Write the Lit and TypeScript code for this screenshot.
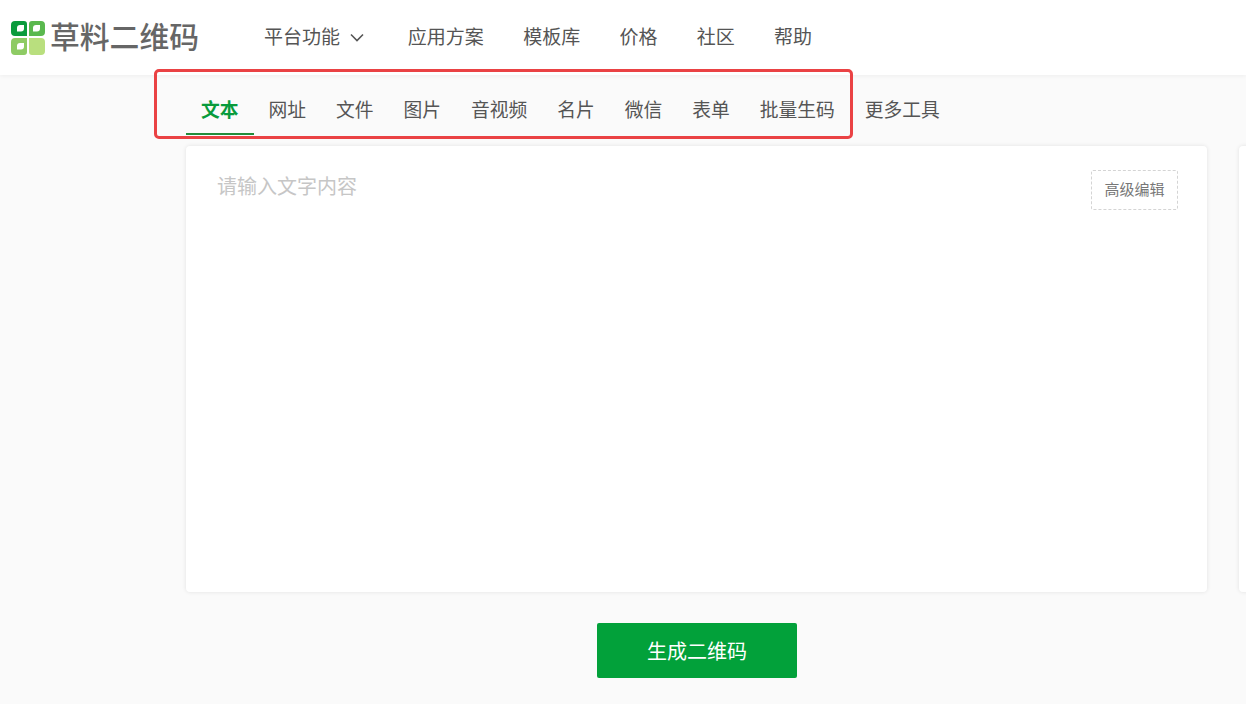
import { LitElement, html, css } from "lit";
import { customElement } from "lit/decorators.js";

const NAV = ["应用方案", "模板库", "价格", "社区", "帮助"];
const TABS = ["文本", "网址", "文件", "图片", "音视频", "名片", "微信", "表单", "批量生码", "更多工具"];

@customElement("app-root")
export class AppRoot extends LitElement {
  static styles = css`
    :host {
      display: block;
      position: relative;
      width: 100%;
      height: 704px;
      overflow: hidden;
      background: #fafafa;
      font-family: "Liberation Sans", "Noto Sans CJK SC", sans-serif;
      color: #555;
    }
    .header {
      height: 75px;
      box-sizing: border-box;
      background: #fff;
      box-shadow: 0 1px 4px rgba(0, 0, 0, 0.05);
      display: flex;
      align-items: center;
      padding-left: 11px;
    }
    .logo {
      display: flex;
      align-items: center;
      gap: 4px;
      width: 253px;
      flex: none;
    }
    .logo svg { display: block; flex: none; }
    .logo-text {
      font-size: 29.8px;
      line-height: 34px;
      font-weight: 500;
      color: #666;
      white-space: nowrap;
    }
    .nav { display: flex; align-items: center; gap: 39.3px; font-size: 19px; color: #555; }
    .nav-item { display: flex; align-items: center; gap: 10px; white-space: nowrap; line-height: 26px; }
    .chevron { margin-right: 4.5px; }
    .tabs {
      display: flex;
      margin: 19px 0 0 186px;
      height: 41px;
      box-sizing: border-box;
    }
    .tab {
      padding: 0 15px;
      font-size: 18.75px;
      line-height: 33px;
      color: #555;
      white-space: nowrap;
      box-sizing: border-box;
    }
    .tab.active {
      color: #089b3c;
      font-weight: 700;
      border-bottom: 2px solid #218c3a;
    }
    .cards {
      display: flex;
      gap: 32px;
      margin: 11px 0 0 186px;
      height: 446px;
    }
    .card {
      position: relative;
      flex: none;
      width: 1021px;
      height: 100%;
      box-sizing: border-box;
      background: #fff;
      border-radius: 4px;
      box-shadow: 0 0 4px rgba(0, 0, 0, 0.1);
      padding: 27px 29px 0 31px;
      display: flex;
      justify-content: space-between;
      align-items: flex-start;
    }
    .card.side { width: 300px; padding: 0; }
    .placeholder { font-size: 20px; line-height: 29px; color: #c6c6c6; }
    .advanced {
      margin-top: -3px;
      width: 87px;
      height: 40px;
      box-sizing: border-box;
      border: 1px dashed #d4d4d4;
      border-radius: 2px;
      display: flex;
      align-items: center;
      justify-content: center;
      padding-bottom: 3px;
      font-size: 15px;
      color: #777;
    }
    .actions { display: flex; justify-content: center; margin: 31px 0 0 148px; }
    .generate {
      width: 200px;
      height: 55px;
      border: none;
      border-radius: 2px;
      background: #02a13a;
      color: #fff;
      font-family: "Noto Sans CJK SC", sans-serif;
      font-size: 20px;
      font-weight: 400;
      padding: 0;
    }
    .highlight {
      position: absolute;
      left: 154px;
      top: 69px;
      width: 699px;
      height: 70px;
      box-sizing: border-box;
      border: 3px solid #ea4244;
      border-radius: 5px;
      pointer-events: none;
    }
  `;

  render() {
    return html`
      <header class="header">
        <div class="logo">
          <svg width="35" height="34" viewBox="0 0 35 34" aria-hidden="true">
            <path fill-rule="evenodd" fill="#0a9b3c" d="M4 0h9a3 3 0 0 1 3 3v12H4a4 4 0 0 1-4-4V4a4 4 0 0 1 4-4ZM9 4a3 3 0 0 0-3 3v3.500h4a3 3 0 0 0 3-3V4Z"/>
            <path fill-rule="evenodd" fill="#5ab84e" d="M21 0h9a4 4 0 0 1 4 4v7a4 4 0 0 1-4 4H18V3a3 3 0 0 1 3-3ZM25 4a3 3 0 0 0-3 3v3.500h4a3 3 0 0 0 3-3V4Z"/>
            <path fill-rule="evenodd" fill="#8ecb64" d="M4 17h12v14a3 3 0 0 1-3 3H4a4 4 0 0 1-4-4v-9a4 4 0 0 1 4-4ZM9 22a3 3 0 0 0-3 3v3.500h4a3 3 0 0 0 3-3V22Z"/>
            <path fill="#b9df7e" d="M18 17h12a4 4 0 0 1 4 4v9a4 4 0 0 1-4 4h-9a3 3 0 0 1-3-3Z"/>
          </svg>
          <span class="logo-text">草料二维码</span>
        </div>
        <nav class="nav">
          <span class="nav-item">平台功能
            <svg class="chevron" width="14" height="9" viewBox="0 0 14 9" aria-hidden="true"><path d="M1 1.500 7 7.500l6-6" fill="none" stroke="#555" stroke-width="1.600"/></svg>
          </span>
          ${NAV.map((n) => html`<span class="nav-item">${n}</span>`)}
        </nav>
      </header>
      <div class="tabs">
        ${TABS.map((t, i) => html`<div class="tab ${i === 0 ? "active" : ""}">${t}</div>`)}
      </div>
      <div class="cards">
        <section class="card">
          <div class="placeholder">请输入文字内容</div>
          <div class="advanced">高级编辑</div>
        </section>
        <section class="card side"></section>
      </div>
      <div class="actions"><button class="generate">生成二维码</button></div>
      <div class="highlight"></div>
    `;
  }
}
